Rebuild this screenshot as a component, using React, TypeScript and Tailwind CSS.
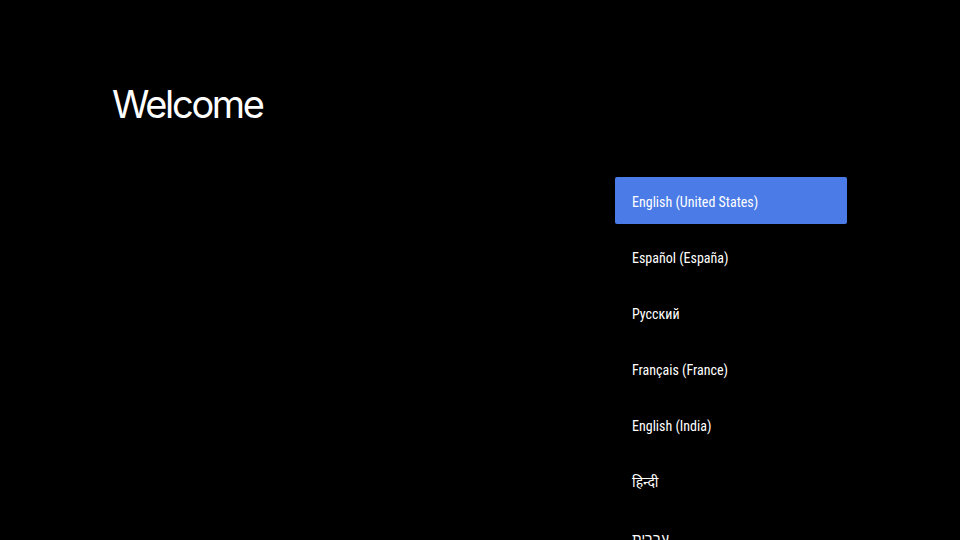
import React from 'react';

const languages = [
  'English (United States)',
  'Español (España)',
  'Русский',
  'Français (France)',
  'English (India)',
  'हिन्दी',
  'עברית',
];

export default function App() {
  return (
    <div className="w-[960px] h-[540px] bg-black overflow-hidden flex text-white">
      <div className="w-[615px] pl-[112px] pt-[80px]">
        <h1 className="text-[38px] leading-[48px] font-normal tracking-[-2.3px]" style={{ fontFamily: 'Inter, sans-serif' }}>
          Welcome
        </h1>
      </div>
      <div className="w-[232px] pt-[177px] flex flex-col gap-[9px]">
        {languages.map((lang, i) => (
          <div
            key={lang}
            className={`h-[47px] shrink-0 flex items-center pl-[17px] pr-[16px] pt-[3px] rounded-[2px] text-[14px] font-stretch-condensed ${i === 0 ? 'bg-[#4a7be6]' : ''}`}
            style={{ fontFamily: 'Roboto, "Noto Sans", sans-serif' }}
          >
            {lang}
          </div>
        ))}
      </div>
    </div>
  );
}
